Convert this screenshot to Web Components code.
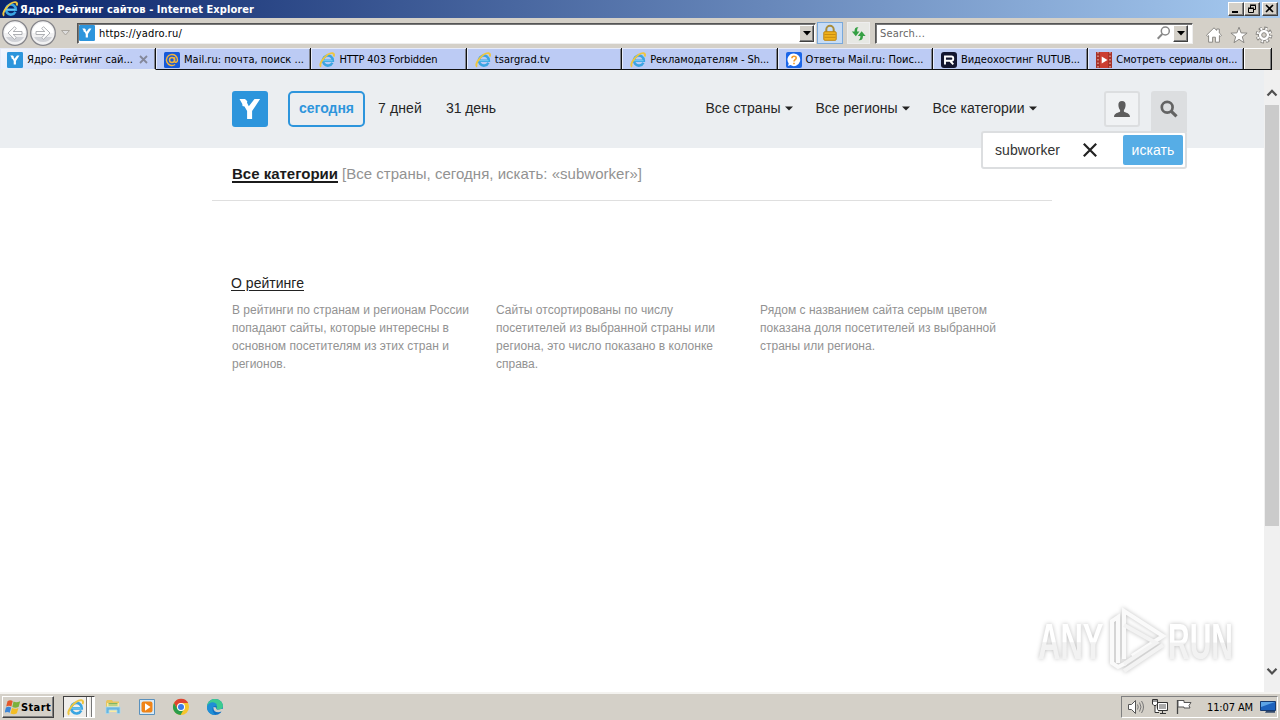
<!DOCTYPE html>
<html lang="ru">
<head>
<meta charset="utf-8">
<title>Ядро: Рейтинг сайтов</title>
<style>
  html, body { margin: 0; height: 100%; overflow: hidden; }
  body { background: #d4d0c8; font: 11px "DejaVu Sans Condensed", "DejaVu Sans", sans-serif; color: #000; }
</style>
</head>
<body>
<desktop-screen></desktop-screen>

<script>
// Attach an open shadow root filled with the given markup
function render(host, html) {
  const template = document.createElement('template');
  template.innerHTML = html.trim();
  host.attachShadow({ mode: 'open' }).appendChild(template.content.cloneNode(true));
}

const ICONS = {
  ie: `<svg viewBox="0 0 16 16"><path d="M13.4 10.8A5 5 0 1 1 13.900 8.8H5" fill="none" stroke="#3aa5e2" stroke-width="2.5"/><path d="M4 8.600h9.500" stroke="#6cc6f0" stroke-width="1.300"/><path d="M2.200 14.600C-1.600 12.800 7.800.4 13.600 1.200c2 .4 1.600 2.200.9 3.400" fill="none" stroke="#eec640" stroke-width="1.900"/></svg>`,
  yadro: `<svg viewBox="0 0 36 36"><rect width="36" height="36" rx="3" fill="#2d95dc"/><path d="M7.500 8h5.500l2.300 2.300-.3 1.500 1.800 3.500L22.500 8h5.600l-8 12v8h-5v-8l-2.600-4.500-2-.5-.2-2z" fill="#fff"/></svg>`,
  mail: `<svg viewBox="0 0 16 16"><rect width="16" height="16" rx="1.500" fill="#1659d9"/><circle cx="8" cy="8" r="2.500" fill="none" stroke="#f3b53b" stroke-width="1.500"/><path d="M10.600 5.300v3.800c0 2 2.900 1.500 2.900-1.200a5.500 5.500 0 1 0-2.400 4.600" fill="none" stroke="#f3b53b" stroke-width="1.400"/></svg>`,
  answers: `<svg viewBox="0 0 16 16"><rect width="16" height="16" rx="2" fill="#1b66e8"/><path d="M8 1.500a6.300 6.300 0 1 1-3.500 11.600L2 14l.7-2.500A6.300 6.300 0 0 1 8 1.500" fill="#fff"/><path d="M5.900 6.300c0-2.800 4.300-2.700 4.300-.3C10.200 7.600 8 7.700 8 9.500M8 10.700v1.600" fill="none" stroke="#f39a27" stroke-width="1.600"/></svg>`,
  rutube: `<svg viewBox="0 0 16 16"><rect width="16" height="16" rx="3" fill="#12152f"/><path d="M4 12.500v-8h6.500q1.700 0 1.700 1.700v.8q0 1.700-1.700 1.700H4M9.300 9l3 3.300" fill="none" stroke="#fff" stroke-width="1.900"/></svg>`,
  serial: `<svg viewBox="0 0 16 16"><rect width="16" height="16" fill="#a83229"/><path d="M2 0v16M14 0v16" stroke="#d99a90" stroke-width="1.500" stroke-dasharray="1.500 2"/><path d="M4 0h8v16H4z" fill="#cb3d31"/><path d="M5.700 4.500 11.500 8l-5.800 3.500z" fill="#fff"/></svg>`,
  back: `<svg viewBox="0 0 28 28"><circle cx="14" cy="14" r="12.300" fill="#f1f1f2" stroke="#85858a" stroke-width="1.300"/><path d="M3.500 14a10.500 10.500 0 0 1 21 0z" fill="#fff"/><path d="M5 18a10 9 0 0 0 18 0" fill="#d0d2d7"/><path d="m7 14 6.500-6.300L15.300 9.500 12.200 12.500H21v3h-8.800l3.100 3-1.800 1.800z" fill="#fff" stroke="#a5a7ac" stroke-width=".9"/></svg>`,
  lock: `<svg viewBox="0 0 16 18"><path d="M4.300 9V5.500a3.700 3.700 0 0 1 7.400 0V9" fill="none" stroke="#a98d3a" stroke-width="2"/><rect x="1.800" y="7.700" width="12.400" height="8.600" rx="1" fill="#efb21d" stroke="#bd8514"/><path d="M2.500 10.500h11M2.500 13.300h11" stroke="#c98d12"/></svg>`,
  refresh: `<svg viewBox="0 0 20 18"><path d="M10 2.500C7 2 5.800 3.500 5.800 7H3l4.200 5L11 7H8.500c0-2 .2-3.500 1.500-4.500" fill="#35a044"/><path d="M10 16c3.300.5 4.700-1 4.700-4.500h2.800l-4.200-5-4 5H12c0 2-.5 3.500-2 4.500" fill="#35a044"/></svg>`,
  lens: `<svg viewBox="0 0 16 16"><circle cx="9.300" cy="6" r="4" fill="none" stroke="#888" stroke-width="1.500"/><path d="m6.300 9-4.600 4.700" stroke="#888" stroke-width="2"/></svg>`,
  home: `<svg viewBox="0 0 18 18"><path d="M1.500 9.200 9 1.800l2.700 2.600V3h2.600v4l2.200 2.200-1.100 1.200-1-.8v6.600h-4v-5H7.600v5h-4V9.600l-1 .8z" fill="#fff" stroke="#8b8985"/></svg>`,
  star: `<svg viewBox="0 0 18 18"><path d="m9 1.200 2.100 5.700 6 .2-4.800 3.700 1.700 5.900L9 13.300l-5 3.400 1.700-5.900L.9 7.100l6-.2z" fill="#fff" stroke="#8b8985"/></svg>`,
  gear: `<svg viewBox="0 0 18 18"><circle cx="9" cy="9" r="6.900" fill="none" stroke="#8b8985" stroke-width="3" stroke-dasharray="3.200 2.220"/><circle cx="9" cy="9" r="5.600" fill="#fff" stroke="#8b8985"/><circle cx="9" cy="9" r="6.400" fill="none" stroke="#fff" stroke-width="2.200" stroke-dasharray="1.700 3.327" stroke-dashoffset="-.6"/><circle cx="9" cy="9" r="2.300" fill="#d4d0c8" stroke="#8b8985"/></svg>`,
  user: `<svg viewBox="0 0 16 16"><path d="M8 0c2.400 0 3.700 1.500 3.600 4C11.500 6.600 10.800 8 9.900 9v1.500c1 1.200 6.100 1.300 6.100 5.500H0c0-4.200 5.100-4.300 6.100-5.500V9C5.200 8 4.500 6.600 4.400 4 4.300 1.500 5.600 0 8 0" fill="#5d5d5d"/></svg>`,
  search: `<svg viewBox="0 0 18 18"><circle cx="7.200" cy="7.300" r="5.400" fill="none" stroke="#636363" stroke-width="2.700"/><path d="m11.300 11.300 5.200 5" stroke="#636363" stroke-width="3.200"/></svg>`,
  cross: `<svg viewBox="0 0 14 14"><path d="m.8.800 12.400 12.400M13.200.800.800 13.200" stroke="#222" stroke-width="2.200"/></svg>`,
  windows: `<svg viewBox="0 0 16 16"><path d="M2.500 2.200c2-1.200 3.700-1 5.200-.1L6.400 7.400c-1.700-1-3.400-.9-5.200 0z" fill="#e4582b"/><path d="M8.500 2.500c2 1 4 1 6.700-.3l-1.500 5.500c-2.200 1.200-4.200 1.200-6.400.2z" fill="#7bb13c"/><path d="M1 8.500c1.700-1 3.400-1 5.200 0l-1.500 5.300c-1.700-1-3.400-1-5.200 0z" fill="#3c86d8"/><path d="M7 9c2.200 1.100 4 1 6.400-.1l-1.500 5.400c-2.200 1.300-4.200 1.200-6.400.2z" fill="#f3bd25"/></svg>`,
  folder: `<svg viewBox="0 0 18 18"><path d="M2 3.500 3 2h5l1 1.500h6V14H2z" fill="#e8c55e"/><path d="M3 5h12v9H3z" fill="#fbeaa2"/><path d="M4.500 5.500h9M4.500 7h9" stroke="#7db767"/><path d="M2 9h14v6.500h-3V12H5v3.500H2z" fill="#69b5df" stroke="#a5dbf2" stroke-width=".8"/></svg>`,
  player: `<svg viewBox="0 0 18 18"><path d="M1.500 1.500h15v15h-15z" fill="#d9eaf7" stroke="#5a91bd"/><rect x="3.500" y="3.500" width="11" height="11" rx="2" fill="#f08418"/><path d="m7 5.300 5.500 3.700L7 12.700z" fill="#fff"/></svg>`,
  chrome: `<svg viewBox="0 0 18 18"><circle cx="9" cy="9" r="8" fill="#f6c52c"/><path d="M2 5a8 8 0 0 1 14.200 0H9a4 4 0 0 0-3.500 6z" fill="#df4331"/><path d="M2 5a8 8 0 0 0 6.500 12l3.500-6a4 4 0 0 1-6.500 0z" fill="#2a9d4c"/><circle cx="9" cy="9" r="4" fill="#fff"/><circle cx="9" cy="9" r="3" fill="#3c7be8"/></svg>`,
  edge: `<svg viewBox="0 0 18 18"><circle cx="9" cy="9" r="8" fill="#1272c4"/><path d="M1 8.500C1.500 3.500 5 1 9 1c5 0 8 3.500 8 7 0 2.500-2 3.800-4.300 3.800-2 0-3-.8-2-2C12 7 8 4.500 1 8.500" fill="#3ccb90"/><path d="M1 8.500C3 3.500 9 3 11 7L9 8c-3 0-4 5 .5 9C4 17 .5 13 1 8.500" fill="#208fd5"/><path d="M7.500 9c-.7 4.600 3.500 6.500 8 4.600l1.500 1.900h2V11h-4c-2.500 1.500-5.500.8-5-1.500z" fill="#d4d0c8"/></svg>`,
  sound: `<svg viewBox="0 0 18 18"><path d="M1.500 6.500h3l4-4v13l-4-4h-3z" fill="#fff" stroke="#555"/><path d="M10.500 6.500q1.500 2.500 0 5M12.500 4.500q3 4.500 0 9M14.500 3q4 6 0 12" fill="none" stroke="#777"/></svg>`,
  network: `<svg viewBox="0 0 18 18"><path d="M6.500 4.500h10v8h-10z" fill="#aaa" stroke="#333"/><path d="M7.500 5.500h8v6h-8z" fill="none" stroke="#fff"/><path d="M9 15.500h6M11.500 13v2" stroke="#333"/><path d="M1.500 1.500h5V6l-1.500 1.500H3L1.500 6zM4 7.500v7h4M3 1v3M5 1v3" fill="#fff" stroke="#333"/></svg>`,
  flag: `<svg viewBox="0 0 18 18"><path d="M2.500 2v14" stroke="#444" stroke-width="1.300"/><path d="M3 2.500h6v2h7l-2 3 1 2.500H9V9H3z" fill="#fff" stroke="#555"/></svg>`,
  monitor: `<svg viewBox="0 0 16 16"><path d="M.5 2.500h15v9H.5z" fill="#1d62bd" stroke="#173a70"/><path d="M1 3h14L1 8z" fill="#5da4e6"/><path d="M6 12h9v1.800H5z" fill="#334a6b"/></svg>`,
};

class UiIcon extends HTMLElement {
  connectedCallback() {
    const size = this.getAttribute('size') || 16;
    render(this, `
      <style>
        :host { display: block; flex: none; width: ${size}px; height: ${size}px; }
        svg { display: block; width: 100%; height: 100%; }
      </style>${ICONS[this.getAttribute('name')]}`);
  }
}

// One line of text, tracked so that it takes exactly "w" pixels
class FitText extends HTMLElement {
  connectedCallback() {
    render(this, `
      <style>
        :host { display: inline-block; flex: none; white-space: pre; }
      </style><slot></slot>`);
    const target = Number(this.getAttribute('w'));
    const natural = this.getBoundingClientRect().width;
    this.style.letterSpacing = (target - natural) / this.textContent.length + 'px';
  }
}

class ClassicButton extends HTMLElement {
  connectedCallback() {
    render(this, `
      <style>
        :host {
          display: flex; flex: none; box-sizing: border-box; align-items: center; justify-content: center;
          background: #d4d0c8; border: 1px solid; border-color: #fff #404040 #404040 #fff;
          box-shadow: inset -1px -1px #808080;
        }
      </style><slot></slot>`);
  }
}

class TitleBar extends HTMLElement {
  connectedCallback() {
    render(this, `
      <style>
        :host {
          display: flex; box-sizing: border-box; height: 18px; padding: 0 2px 0 2px; align-items: center;
          background: linear-gradient(90deg, #0a246a, #a6caf0); color: #fff; font-weight: bold;
        }
        fit-text { margin-left: 2px; }
        .buttons { display: flex; margin-left: auto; }
        classic-button { width: 16px; height: 14px; }
        .close { margin-left: 2px; }
        svg { display: block; }
      </style>
      <ui-icon name="ie"></ui-icon>
      <fit-text w="234">Ядро: Рейтинг сайтов - Internet Explorer</fit-text>
      <div class="buttons">
        <classic-button><svg width="12" height="10"><path d="M2 8h6" stroke="#000" stroke-width="2"/></svg></classic-button>
        <classic-button><svg width="12" height="10"><path d="M4.500 4V1.500h5v4H8M4 1h6M2.500 4.500h5v4h-5zM2 4h6" fill="none" stroke="#000"/></svg></classic-button>
        <classic-button class="close"><svg width="12" height="10"><path d="m2 1 7 7m0-7-7 7" stroke="#000" stroke-width="1.600"/></svg></classic-button>
      </div>`);
  }
}

class NavBar extends HTMLElement {
  connectedCallback() {
    render(this, `
      <style>
        :host { display: flex; box-sizing: border-box; height: 30px; align-items: center; padding: 0 7px 0 1px; background: #d4d0c8; }
        .pair { display: flex; padding-right: 4px; }
        .forward { transform: scaleX(-1); }
        .tri { margin-right: 7px; }
        .field {
          display: flex; box-sizing: border-box; height: 21px; align-items: center; padding: 0 1px 0 2px;
          background: #fff; border: 1px solid; border-color: #555 #eee #eee #555; box-shadow: inset 1px 1px #777;
        }
        .address { width: 739px; }
        .address ui-icon { margin-left: -1px; }
        .address fit-text { margin-left: 4px; }
        .search { width: 318px; padding-left: 4px; margin-left: 5px; color: #666; }
        .search ui-icon { margin-left: auto; }
        .search classic-button { margin: 0 3px 0 1px; }
        .address classic-button { margin-left: auto; }
        classic-button { width: 15px; height: 17px; }
        .tool { display: flex; box-sizing: border-box; width: 23px; height: 22px; align-items: center; justify-content: center; border: 1px solid #eee; background: #e7e8e4; }
        .tool.on { width: 26px; border-color: #79a9dc; background: #c7dcf5; margin: 0 4px 0 1px; }
        .right { display: flex; margin-left: auto; gap: 7px; padding-top: 3px; }
      </style>
      <div class="pair"><ui-icon name="back" size="28"></ui-icon><ui-icon class="forward" name="back" size="28"></ui-icon></div>
      <svg class="tri" width="9" height="6"><path d="M.5.500h8l-4 4.500z" fill="#ddd" stroke="#aaa69f"/></svg>
      <div class="field address">
        <ui-icon name="yadro"></ui-icon><fit-text w="83">https://yadro.ru/</fit-text>
        <classic-button><svg width="8" height="5"><path d="M0 0h8L4 4.500z"/></svg></classic-button>
      </div>
      <div class="tool on"><ui-icon name="lock" size="18"></ui-icon></div>
      <div class="tool"><ui-icon name="refresh" size="19"></ui-icon></div>
      <div class="field search">
        <fit-text w="45">Search...</fit-text><ui-icon name="lens"></ui-icon>
        <classic-button><svg width="8" height="5"><path d="M0 0h8L4 4.500z"/></svg></classic-button>
      </div>
      <div class="right"><ui-icon name="home" size="18"></ui-icon><ui-icon name="star" size="18"></ui-icon><ui-icon name="gear" size="18"></ui-icon></div>`);
  }
}

class BrowserTab extends HTMLElement {
  connectedCallback() {
    render(this, `
      <style>
        :host {
          display: flex; flex: none; box-sizing: border-box; width: 155.4px; height: 22px; align-items: center; gap: 4px;
          padding: 2px 0 0 8px; background: #bccbf4; border: solid #111; border-width: 0 1px 1px 0;
          box-shadow: inset 1px 1px #e6ebfa, inset -1px 0 #808490;
        }
        :host([active]) { width: 156px; padding-left: 7px; background: linear-gradient(135deg, #f4f7fe, #c0cef5 75%); border-bottom-color: #eceff1; }
        .close { display: none; margin-left: 2px; }
        :host([active]) .close { display: block; }
      </style>
      <ui-icon name="${this.getAttribute('icon')}"></ui-icon><slot></slot>
      <svg class="close" width="9" height="9"><path d="m1 1 7 7m0-7-7 7" stroke="#84889a" stroke-width="1.800"/></svg>`);
  }
}

class TabStrip extends HTMLElement {
  connectedCallback() {
    render(this, `
      <style>
        :host { display: flex; height: 22px; background: #d4d0c8; }
        .new { box-sizing: border-box; width: 28px; border: solid #111; border-width: 0 1px 1px 0; box-shadow: inset 1px 1px #fff, inset -1px 0 #808080; }
      </style>
      <browser-tab active icon="yadro"><fit-text w="106">Ядро: Рейтинг сай...</fit-text></browser-tab>
      <browser-tab icon="mail"><fit-text w="120">Mail.ru: почта, поиск ...</fit-text></browser-tab>
      <browser-tab icon="ie"><fit-text w="98">HTTP 403 Forbidden</fit-text></browser-tab>
      <browser-tab icon="ie"><fit-text w="55">tsargrad.tv</fit-text></browser-tab>
      <browser-tab icon="ie"><fit-text w="119">Рекламодателям - Sh...</fit-text></browser-tab>
      <browser-tab icon="answers"><fit-text w="118">Ответы Mail.ru: Поис...</fit-text></browser-tab>
      <browser-tab icon="rutube"><fit-text w="119">Видеохостинг RUTUB...</fit-text></browser-tab>
      <browser-tab icon="serial"><fit-text w="121">Смотреть сериалы он...</fit-text></browser-tab>
      <div class="new"></div>`);
  }
}

class MenuLink extends HTMLElement {
  connectedCallback() {
    render(this, `
      <style>
        :host { display: flex; align-items: center; gap: 4px; }
      </style>
      <slot></slot><svg width="8" height="5"><path d="M0 .500h8L4 4.500z" fill="#222"/></svg>`);
  }
}

class SearchPopup extends HTMLElement {
  connectedCallback() {
    render(this, `
      <style>
        :host {
          display: flex; box-sizing: border-box; width: 206px; height: 38px; align-items: center; padding: 0 2px 0 12px;
          background: #fff; border: 2px solid #dcdee0; border-radius: 3px; color: #333;
        }
        ui-icon { margin-left: 23px; }
        button {
          width: 60px; height: 30px; margin-left: auto; padding: 0; border: 0; border-radius: 2px;
          background: #56ade6; color: #fff; font: inherit;
        }
      </style>
      <fit-text w="65">subworker</fit-text><ui-icon name="cross" size="14"></ui-icon>
      <button><fit-text w="43">искать</fit-text></button>`);
  }
}

class SiteHeader extends HTMLElement {
  connectedCallback() {
    render(this, `
      <style>
        :host {
          display: flex; position: relative; box-sizing: border-box; height: 78px; padding: 21px 77px 0 232px;
          background: #ebeef1; color: #262626; font-size: 14px;
        }
        .period { display: flex; height: 36px; margin-left: 20px; line-height: 34px; }
        .today {
          box-sizing: border-box; width: 77px; height: 36px; padding-left: 9px; line-height: 30px;
          border: 2px solid #2d95dc; border-radius: 5px; color: #2d95dc; font-weight: bold; margin-right: 13px;
        }
        .today + fit-text { margin-right: 24px; }
        .menus { display: flex; gap: 23px; height: 34px; margin-left: 209.500px; line-height: 34px; }
        .tools { display: flex; margin-left: auto; gap: 11px; }
        .user, .search { display: flex; box-sizing: border-box; width: 36px; height: 36px; align-items: center; justify-content: center; }
        .user { border: 2px solid #dcdee0; border-radius: 3px; background: #f0f2f4; }
        .search { height: 41px; padding-bottom: 6px; background: #dcdee0; border-radius: 3px 3px 0 0; }
        search-popup { position: absolute; right: 77px; top: 61px; }
      </style>
      <ui-icon name="yadro" size="36"></ui-icon>
      <div class="period">
        <div class="today"><fit-text w="55">сегодня</fit-text></div>
        <fit-text w="44">7 дней</fit-text>
        <fit-text w="50">31 день</fit-text>
      </div>
      <div class="menus">
        <menu-link><fit-text w="75">Все страны</fit-text></menu-link>
        <menu-link><fit-text w="82">Все регионы</fit-text></menu-link>
        <menu-link><fit-text w="92">Все категории</fit-text></menu-link>
      </div>
      <div class="tools">
        <div class="user"><ui-icon name="user" size="16"></ui-icon></div>
        <div class="search"><ui-icon name="search" size="18"></ui-icon></div>
      </div>
      <search-popup></search-popup>`);
  }
}

class AboutRating extends HTMLElement {
  connectedCallback() {
    render(this, `
      <style>
        :host { display: block; padding: 73px 0 0 231px; }
        .title { display: block; width: max-content; height: 18px; line-height: 18px; color: #222; font-size: 14px; text-decoration: underline; text-underline-offset: 2px; }
        .columns { display: grid; grid-template-columns: 264px 264px 264px; margin: 9px 0 0 1px; color: #929292; font-size: 12px; line-height: 18px; }
        .columns div { display: flex; flex-direction: column; align-items: flex-start; }
      </style>
      <fit-text class="title" w="73">О рейтинге</fit-text>
      <div class="columns">
        <div>
          <fit-text w="237">В рейтинги по странам и регионам России</fit-text>
          <fit-text w="217">попадают сайты, которые интересны в</fit-text>
          <fit-text w="217">основном посетителям из этих стран и</fit-text>
          <fit-text w="54">регионов.</fit-text>
        </div>
        <div>
          <fit-text w="177">Сайты отсортированы по числу</fit-text>
          <fit-text w="219">посетителей из выбранной страны или</fit-text>
          <fit-text w="217">региона, это число показано в колонке</fit-text>
          <fit-text w="42">справа.</fit-text>
        </div>
        <div>
          <fit-text w="227">Рядом с названием сайта серым цветом</fit-text>
          <fit-text w="236">показана доля посетителей из выбранной</fit-text>
          <fit-text w="115">страны или региона.</fit-text>
        </div>
      </div>`);
  }
}

class PageScrollbar extends HTMLElement {
  connectedCallback() {
    render(this, `
      <style>
        :host { display: flex; flex: none; flex-direction: column; box-sizing: border-box; width: 16px; padding-top: 15px; background: #f0f0f0; }
        svg { display: block; flex: none; }
        .thumb { height: 421px; margin: 4px 1px 0; background: #cbcbcb; }
        .down { margin-top: auto; margin-bottom: 13px; }
      </style>
      <svg width="16" height="16"><path d="m3.500 10.500 4.500-4.700 4.500 4.700" fill="none" stroke="#505050" stroke-width="2.200"/></svg>
      <div class="thumb"></div>
      <svg class="down" width="16" height="16"><path d="m3.500 5.700 4.500 4.700 4.500-4.700" fill="none" stroke="#505050" stroke-width="2.200"/></svg>`);
  }
}

class AnyrunMark extends HTMLElement {
  connectedCallback() {
    render(this, `
      <style>
        :host { display: block; }
        svg { display: block; overflow: visible; filter: drop-shadow(0 0 2px rgba(0, 0, 0, .25)); }
        text { font: bold 50px "Liberation Sans", sans-serif; fill: url(#fade); }
      </style>
      <svg width="210" height="74">
        <defs><linearGradient id="fade" x1="0" y1="0" x2="0" y2="1"><stop offset=".5" stop-color="#fff"/><stop offset=".52" stop-color="#f2f2f2"/></linearGradient></defs>
        <text transform="translate(8 56) scale(.62 1)">ANY</text>
        <path d="M88 60V14l-6 4v42l6 4 8-4M94 56V8l39 25-31 20" fill="none" stroke="#fafafa" stroke-width="4"/>
        <path d="m94 22 32 18-32 21m0 7 39-26" fill="none" stroke="#f3f3f3" stroke-width="4"/>
        <text transform="translate(138 56) scale(.6 1)">RUN</text>
      </svg>`);
  }
}

class RatingPage extends HTMLElement {
  connectedCallback() {
    render(this, `
      <style>
        :host { display: flex; position: relative; height: 622px; background: #fff; font-family: "Liberation Sans", Arial, sans-serif; }
        main { flex: 1; }
        .crumbs { display: flex; box-sizing: border-box; width: 840px; height: 53px; padding: 17px 0 0 20px; margin-left: 212px; gap: 4px; border-bottom: 1px solid #dfdfdf; color: #929292; font-size: 15px; line-height: 18px; }
        .crumbs b { color: #1b1b1b; height: 16px; border-bottom: 2px solid #1b1b1b; }
        anyrun-mark { position: absolute; right: 40px; bottom: 15px; }
      </style>
      <main>
        <site-header></site-header>
        <div class="crumbs">
          <b><fit-text w="106">Все категории</fit-text></b>
          <fit-text w="300">[Все страны, сегодня, искать: «subworker»]</fit-text>
        </div>
        <about-rating></about-rating>
      </main>
      <page-scrollbar></page-scrollbar>
      <anyrun-mark></anyrun-mark>`);
  }
}

class TaskBar extends HTMLElement {
  connectedCallback() {
    render(this, `
      <style>
        :host { display: flex; box-sizing: border-box; height: 28px; padding: 4px 2px 0; background: #d4d0c8; box-shadow: inset 0 2px #f4f3f0; }
        .start { width: 52px; height: 22px; font-weight: bold; }
        .current { display: flex; box-sizing: border-box; width: 32px; height: 22px; margin-left: 9px; border: 1px solid; border-color: #404040 #fff #fff #404040; background: #f0eeeb; }
        .current ui-icon { margin: 2px 0 0 3px; }
        .current i { width: 3px; margin-left: 2px; border-left: 1px solid #777; background: #fff; }
        .pinned { display: flex; gap: 16px; align-items: center; height: 22px; margin-left: 9px; }
        .tray { display: flex; box-sizing: border-box; width: 157px; height: 22px; align-items: center; margin-left: auto; padding-left: 5px; border: 1px solid; border-color: #808080 #fff #fff #808080; }
        .tray ui-icon { margin-right: 6px; }
        .tray fit-text { margin: 0 7px 0 8px; }
      </style>
      <classic-button class="start"><ui-icon name="windows"></ui-icon><fit-text w="30">Start</fit-text></classic-button>
      <div class="current"><ui-icon name="ie" size="17"></ui-icon><i></i><i></i></div>
      <div class="pinned">
        <ui-icon name="folder" size="18"></ui-icon>
        <ui-icon name="player" size="18"></ui-icon>
        <ui-icon name="chrome" size="18"></ui-icon>
        <ui-icon name="edge" size="18"></ui-icon>
      </div>
      <div class="tray">
        <ui-icon name="sound" size="18"></ui-icon>
        <ui-icon name="network" size="18"></ui-icon>
        <ui-icon name="flag" size="18"></ui-icon>
        <fit-text w="46">11:07 AM</fit-text>
        <ui-icon name="monitor"></ui-icon>
      </div>`);
  }
}

class DesktopScreen extends HTMLElement {
  connectedCallback() {
    render(this, `
      <style>
        :host { display: flex; flex-direction: column; width: 1280px; height: 720px; }
        title-bar, nav-bar, tab-strip, rating-page, task-bar { flex: none; }
      </style>
      <title-bar></title-bar>
      <nav-bar></nav-bar>
      <tab-strip></tab-strip>
      <rating-page></rating-page>
      <task-bar></task-bar>`);
  }
}

customElements.define('desktop-screen', DesktopScreen);
customElements.define('title-bar', TitleBar);
customElements.define('nav-bar', NavBar);
customElements.define('tab-strip', TabStrip);
customElements.define('browser-tab', BrowserTab);
customElements.define('rating-page', RatingPage);
customElements.define('site-header', SiteHeader);
customElements.define('menu-link', MenuLink);
customElements.define('search-popup', SearchPopup);
customElements.define('about-rating', AboutRating);
customElements.define('page-scrollbar', PageScrollbar);
customElements.define('anyrun-mark', AnyrunMark);
customElements.define('task-bar', TaskBar);
customElements.define('classic-button', ClassicButton);
customElements.define('ui-icon', UiIcon);
// Last, because it measures text in its final font
customElements.define('fit-text', FitText);
</script>
</body>
</html>
